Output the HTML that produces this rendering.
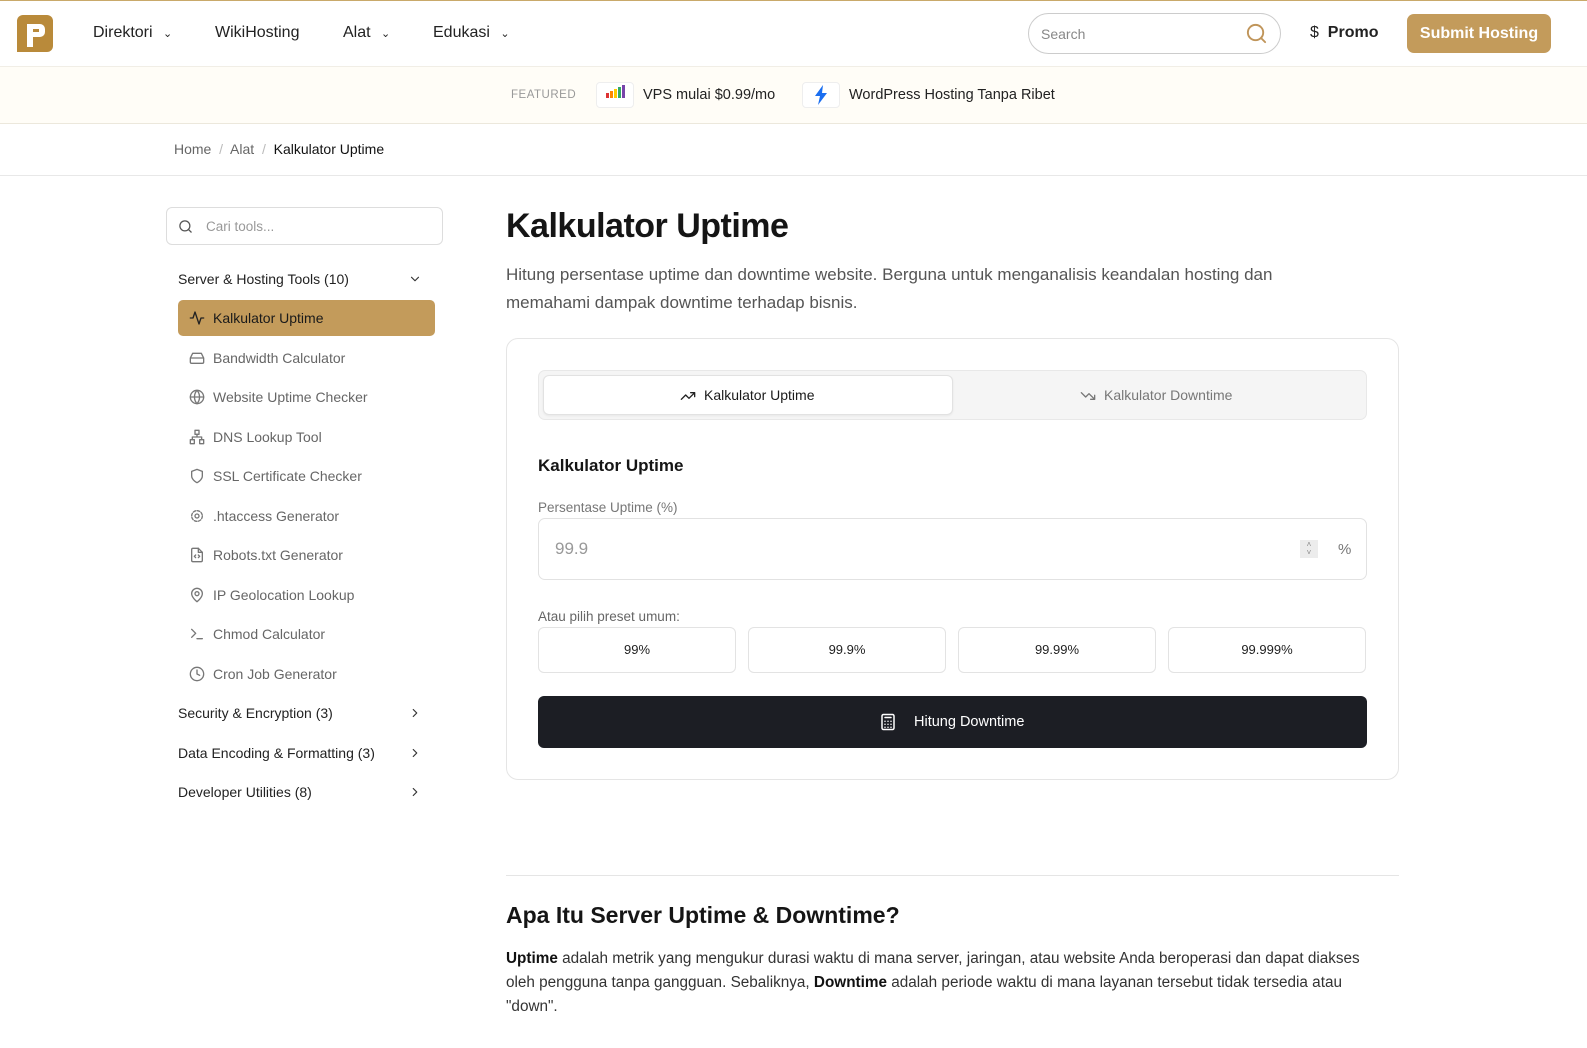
<!DOCTYPE html>
<html><head><meta charset="utf-8"><style>
*{box-sizing:border-box;margin:0;padding:0}
body{width:1587px;height:1048px;overflow:hidden;background:#fff;font-family:"Liberation Sans",sans-serif;color:#1c1c1c;position:relative}
.a{position:absolute}
.ic{fill:none;stroke:currentColor;stroke-width:2;stroke-linecap:round;stroke-linejoin:round}
.nav{font-size:16px;color:#222;top:24px}
.side{left:213px;font-size:14px;color:#666}
.sico{left:189px;width:16px;height:16px;color:#777}
.cat{left:178px;font-size:14px;color:#222}
.pre{top:627px;width:198px;height:46px;border:1px solid #e3e3e3;border-radius:6px;font-size:13px;text-align:center;line-height:44px;color:#222}
</style></head><body>
<div class="a" style="left:0;top:0;width:1587px;height:1px;background:#c9a96a"></div>
<!-- header -->
<svg class="a" style="left:17px;top:15px" width="36" height="37" viewBox="0 0 36 37"><path d="M6 0h24a6 6 0 0 1 6 6v25a6 6 0 0 1-6 6H0V6a6 6 0 0 1 6-6z" fill="#b98a3a"/><path d="M10 9h13a5 5 0 0 1 5 5v3a5 5 0 0 1-5 5h-7v10h-6z" fill="#fff"/><rect x="16" y="14" width="6" height="3" fill="#b98a3a"/></svg>
<div class="a nav" style="left:93px">Direktori <span style="font-size:11px;margin-left:6px">&#8964;</span></div>
<div class="a nav" style="left:215px;font-weight:500">WikiHosting</div>
<div class="a nav" style="left:343px">Alat <span style="font-size:11px;margin-left:6px">&#8964;</span></div>
<div class="a nav" style="left:433px">Edukasi <span style="font-size:11px;margin-left:6px">&#8964;</span></div>
<div class="a" style="left:1028px;top:13px;width:253px;height:41px;border:1px solid #ccc;border-radius:21px"></div>
<div class="a" style="left:1041px;top:26px;font-size:14px;color:#888">Search</div>
<svg class="a ic" style="left:1245px;top:22px;color:#c0955a" width="23" height="23" viewBox="0 0 24 24"><circle cx="11" cy="11" r="8"/><path d="M21 21l-4.3-4.3"/></svg>
<div class="a" style="left:1310px;top:24px;font-size:16px;color:#222">$ &nbsp;<b style="font-weight:600">Promo</b></div>
<div class="a" style="left:1407px;top:14px;width:144px;height:39px;background:#c39b5b;border-radius:7px;color:#fff;font-size:16px;font-weight:600;text-align:center;line-height:39px">Submit Hosting</div>
<!-- featured -->
<div class="a" style="left:0;top:66px;width:1587px;height:58px;background:#fffdf7;border-top:1px solid #f1eee6;border-bottom:1px solid #ece8dc"></div>
<div class="a" style="left:511px;top:89px;font-size:11.5px;color:#999;letter-spacing:.5px">FEATURED</div>
<div class="a" style="left:596px;top:82px;width:38px;height:26px;border:1px solid #eee;border-radius:4px;background:#fff">
<div class="a" style="left:9px;top:10px;width:3px;height:5px;background:#d33"></div><div class="a" style="left:13px;top:8px;width:3px;height:7px;background:#f80"></div><div class="a" style="left:17px;top:6px;width:3px;height:9px;background:#fc0"></div><div class="a" style="left:21px;top:4px;width:3px;height:11px;background:#3a6"></div><div class="a" style="left:25px;top:2px;width:3px;height:13px;background:#74a"></div></div>
<div class="a" style="left:643px;top:87px;font-size:14.5px;color:#222">VPS mulai $0.99/mo</div>
<div class="a" style="left:802px;top:82px;width:38px;height:26px;border:1px solid #eee;border-radius:4px;background:#fff"></div>
<svg class="a" style="left:813px;top:85px" width="16" height="20" viewBox="0 0 16 20"><path d="M10 0L2 11h5l-2 9 9-12H9z" fill="#1a6ef0"/></svg>
<div class="a" style="left:849px;top:87px;font-size:14.5px;color:#222">WordPress Hosting Tanpa Ribet</div>
<!-- breadcrumb -->
<div class="a" style="left:174px;top:141px;font-size:14px;color:#666">Home &nbsp;<span style="color:#bbb">/</span>&nbsp; Alat &nbsp;<span style="color:#bbb">/</span>&nbsp; <span style="color:#111;font-weight:500">Kalkulator Uptime</span></div>
<div class="a" style="left:0;top:175px;width:1587px;height:1px;background:#e8e8e8"></div>
<!-- sidebar -->
<div class="a" style="left:166px;top:207px;width:277px;height:38px;border:1px solid #ddd;border-radius:6px"></div>
<svg class="a ic" style="left:178px;top:219px;color:#555" width="15" height="15" viewBox="0 0 24 24"><circle cx="11" cy="11" r="8"/><path d="M21 21l-4.3-4.3"/></svg>
<div class="a" style="left:206px;top:219px;font-size:13.5px;color:#999">Cari tools...</div>
<div class="a cat" style="top:271px">Server &amp; Hosting Tools (10)</div>
<svg class="a ic" style="left:408px;top:272px;color:#333" width="14" height="14" viewBox="0 0 24 24"><path d="M6 9l6 6 6-6"/></svg>
<div class="a" style="left:178px;top:300px;width:257px;height:36px;background:#c39b5b;border-radius:5px"></div>
<svg class="a ic" style="left:189px;top:310px;color:#222" width="16" height="16" viewBox="0 0 24 24"><path d="M22 12h-4l-3 9L9 3l-3 9H2"/></svg>
<div class="a" style="left:213px;top:310px;font-size:14px;color:#1a1a1a">Kalkulator Uptime</div>
<svg class="a ic sico" style="top:350px" viewBox="0 0 24 24"><path d="M22 12H2M5.5 5h13L22 12v6a2 2 0 0 1-2 2H4a2 2 0 0 1-2-2v-6z"/></svg>
<div class="a side" style="top:350px">Bandwidth Calculator</div>
<svg class="a ic sico" style="top:389px" viewBox="0 0 24 24"><circle cx="12" cy="12" r="10"/><path d="M2 12h20M12 2a15 15 0 0 1 0 20M12 2a15 15 0 0 0 0 20"/></svg>
<div class="a side" style="top:389px">Website Uptime Checker</div>
<svg class="a ic sico" style="top:429px" viewBox="0 0 24 24"><rect x="9" y="2" width="6" height="6"/><rect x="2" y="16" width="6" height="6"/><rect x="16" y="16" width="6" height="6"/><path d="M5 16v-4h14v4M12 8v4"/></svg>
<div class="a side" style="top:429px">DNS Lookup Tool</div>
<svg class="a ic sico" style="top:468px" viewBox="0 0 24 24"><path d="M12 22s8-4 8-10V5l-8-3-8 3v7c0 6 8 10 8 10z"/></svg>
<div class="a side" style="top:468px">SSL Certificate Checker</div>
<svg class="a ic sico" style="top:508px" viewBox="0 0 24 24"><circle cx="12" cy="12" r="3"/><circle cx="12" cy="12" r="8" stroke-dasharray="4 2.3"/></svg>
<div class="a side" style="top:508px">.htaccess Generator</div>
<svg class="a ic sico" style="top:547px" viewBox="0 0 24 24"><path d="M14 2H6a2 2 0 0 0-2 2v16a2 2 0 0 0 2 2h12a2 2 0 0 0 2-2V8z"/><path d="M14 2v6h6M10 12l-2 2 2 2M14 12l2 2-2 2"/></svg>
<div class="a side" style="top:547px">Robots.txt Generator</div>
<svg class="a ic sico" style="top:587px" viewBox="0 0 24 24"><path d="M20 10c0 6-8 12-8 12s-8-6-8-12a8 8 0 0 1 16 0z"/><circle cx="12" cy="10" r="3"/></svg>
<div class="a side" style="top:587px">IP Geolocation Lookup</div>
<svg class="a ic sico" style="top:626px" viewBox="0 0 24 24"><path d="M4 17l6-6-6-6M12 19h8"/></svg>
<div class="a side" style="top:626px">Chmod Calculator</div>
<svg class="a ic sico" style="top:666px" viewBox="0 0 24 24"><circle cx="12" cy="12" r="10"/><path d="M12 6v6l4 2"/></svg>
<div class="a side" style="top:666px">Cron Job Generator</div>
<div class="a cat" style="top:705px">Security &amp; Encryption (3)</div>
<div class="a cat" style="top:745px">Data Encoding &amp; Formatting (3)</div>
<div class="a cat" style="top:784px">Developer Utilities (8)</div>
<svg class="a ic" style="left:408px;top:706px;color:#333" width="14" height="14" viewBox="0 0 24 24"><path d="M9 6l6 6-6 6"/></svg>
<svg class="a ic" style="left:408px;top:746px;color:#333" width="14" height="14" viewBox="0 0 24 24"><path d="M9 6l6 6-6 6"/></svg>
<svg class="a ic" style="left:408px;top:785px;color:#333" width="14" height="14" viewBox="0 0 24 24"><path d="M9 6l6 6-6 6"/></svg>
<!-- main -->
<div class="a" style="left:506px;top:207px;font-size:34px;font-weight:700;color:#151515;letter-spacing:-0.5px">Kalkulator Uptime</div>
<div class="a" style="left:506px;top:261px;width:810px;font-size:17px;line-height:28px;color:#555">Hitung persentase uptime dan downtime website. Berguna untuk menganalisis keandalan hosting dan memahami dampak downtime terhadap bisnis.</div>
<div class="a" style="left:506px;top:338px;width:893px;height:442px;border:1px solid #e5e5e5;border-radius:12px"></div>
<div class="a" style="left:538px;top:370px;width:829px;height:50px;background:#f5f5f5;border:1px solid #e8e8e8;border-radius:7px"></div>
<div class="a" style="left:543px;top:375px;width:410px;height:40px;background:#fff;border:1px solid #e2e2e2;border-radius:6px;box-shadow:0 1px 2px rgba(0,0,0,.06)"></div>
<svg class="a ic" style="left:680px;top:388px;color:#222" width="16" height="16" viewBox="0 0 24 24"><path d="M22 7l-8.5 8.5-5-5L2 17M16 7h6v6"/></svg>
<div class="a" style="left:704px;top:387px;font-size:14px;color:#1a1a1a">Kalkulator Uptime</div>
<svg class="a ic" style="left:1080px;top:388px;color:#777" width="16" height="16" viewBox="0 0 24 24"><path d="M22 17l-8.5-8.5-5 5L2 7M16 17h6v-6"/></svg>
<div class="a" style="left:1104px;top:387px;font-size:14px;color:#777">Kalkulator Downtime</div>
<div class="a" style="left:538px;top:456px;font-size:17px;font-weight:700;color:#151515">Kalkulator Uptime</div>
<div class="a" style="left:538px;top:500px;font-size:13.5px;color:#777">Persentase Uptime (%)</div>
<div class="a" style="left:538px;top:518px;width:829px;height:62px;border:1px solid #e2e2e2;border-radius:7px"></div>
<div class="a" style="left:555px;top:539px;font-size:17px;color:#999">99.9</div>
<div class="a" style="left:1300px;top:540px;width:18px;height:18px;background:#ececec;font-size:8px;color:#888;text-align:center;line-height:8px;padding-top:1px">&#708;<br>&#709;</div>
<div class="a" style="left:1338px;top:541px;font-size:15px;color:#777">%</div>
<div class="a" style="left:538px;top:609px;font-size:13.5px;color:#666">Atau pilih preset umum:</div>
<div class="a pre" style="left:538px">99%</div>
<div class="a pre" style="left:748px">99.9%</div>
<div class="a pre" style="left:958px">99.99%</div>
<div class="a pre" style="left:1168px">99.999%</div>
<div class="a" style="left:538px;top:696px;width:829px;height:52px;background:#1c1e24;border-radius:6px"></div>
<svg class="a ic" style="left:879px;top:713px;color:#fff" width="18" height="18" viewBox="0 0 24 24"><rect x="4" y="2" width="16" height="20" rx="2"/><path d="M8 6h8M8 11h.01M12 11h.01M16 11h.01M8 15h.01M12 15h.01M16 15h.01M8 19h.01M12 19h.01M16 19h.01"/></svg>
<div class="a" style="left:914px;top:714px;font-size:14.5px;color:#fff;font-weight:500">Hitung Downtime</div>
<div class="a" style="left:506px;top:875px;width:893px;height:1px;background:#e5e5e5"></div>
<div class="a" style="left:506px;top:902px;font-size:23px;font-weight:700;color:#151515">Apa Itu Server Uptime &amp; Downtime?</div>
<div class="a" style="left:506px;top:947px;width:885px;font-size:15.3px;line-height:24px;color:#333"><b style="color:#111">Uptime</b> adalah metrik yang mengukur durasi waktu di mana server, jaringan, atau website Anda beroperasi dan dapat diakses oleh pengguna tanpa gangguan. Sebaliknya, <b style="color:#111">Downtime</b> adalah periode waktu di mana layanan tersebut tidak tersedia atau "down".</div>
</body></html>
